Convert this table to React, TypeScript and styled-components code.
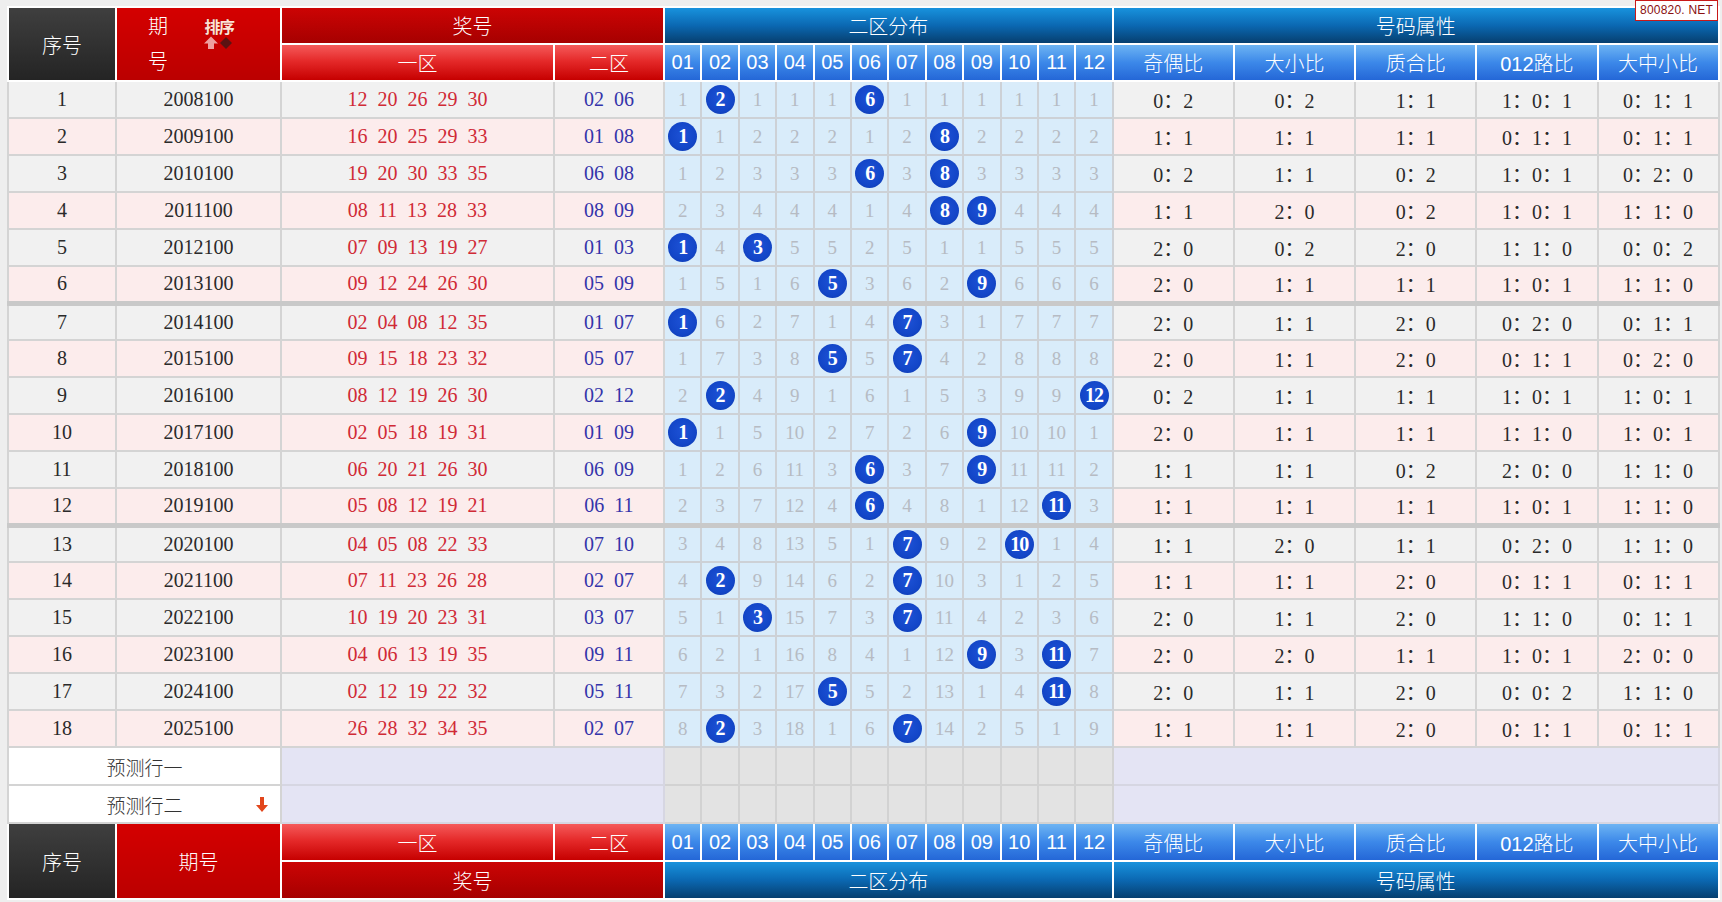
import React from "react"
import styled, { createGlobalStyle, css } from "styled-components"

const GlobalStyle = createGlobalStyle`
  html, body {
    margin: 0;
    padding: 0;
    background: #eeeeee;
  }
  body {
    font-family: "Liberation Serif", "Noto Sans CJK SC", serif;
  }
`

type Tone = "dark" | "period" | "prize" | "zone" | "dist" | "distNum"

const tones: Record<Tone, string> = {
  dark: "linear-gradient(#3f3f3f, #242424)",
  period: "linear-gradient(#d40000, #bb0000)",
  prize: "linear-gradient(#cc0404, #a60000)",
  zone: "linear-gradient(#f55a5a 0%, #e52a2a 45%, #c60000 100%)",
  dist: "linear-gradient(#1892dd 0%, #0b68b2 50%, #063f6f 100%)",
  distNum: "linear-gradient(#6db4f3 0%, #3c88e9 50%, #2467d7 100%)",
}

const Page = styled.div`
  position: relative;
  padding: 6px 4px 4px 7px;
`

const Watermark = styled.div`
  position: absolute;
  top: 0;
  right: 4px;
  padding: 2px 4px;
  background: #fff;
  border: 1px solid #c81818;
  color: #8a1010;
  font-family: "Liberation Sans", sans-serif;
  font-size: 12px;
  line-height: 15px;
  letter-spacing: 0.2px;
`

const Grid = styled.table`
  width: 1711px;
  table-layout: fixed;
  border-collapse: collapse;
`

const HeadRow = styled.tr<{ $tall?: boolean }>`
  height: ${(p) => (p.$tall ? 38 : 36)}px;
`

const HeadCell = styled.th<{ $tone: Tone; $latin?: boolean }>`
  background: ${(p) => tones[p.$tone]};
  color: #fff;
  border: 2px solid #fff;
  padding: 0;
  text-align: center;
  font-weight: 300;
  font-size: 20px;
  font-family: ${(p) =>
    p.$latin ? `"Liberation Sans", "Noto Sans CJK SC", sans-serif` : `"Noto Sans CJK SC", sans-serif`};
`

const PeriodHead = styled.div`
  display: flex;
  align-items: flex-start;
  padding-left: 31px;
  height: 72px;
`

const PeriodStack = styled.div`
  display: flex;
  flex-direction: column;
  line-height: 35px;
`

const SortBox = styled.div`
  display: flex;
  flex-direction: column;
  align-items: center;
  margin-left: 36px;
  margin-top: 9px;
`

const SortLabel = styled.span`
  font-size: 16px;
  line-height: 19px;
  font-weight: 700;
  letter-spacing: -1.5px;
  color: #ffe2d6;
  text-shadow: 0 0 1px #7a0000;
`

const DataRow = styled.tr<{ $sep?: boolean }>`
  height: 37px;
  ${(p) =>
    p.$sep &&
    css`
      & > td {
        border-top: 5px solid #c9c9c9;
      }
    `}
`

const Cell = styled.td<{ $alt: boolean; $color?: string }>`
  padding: 0;
  border: 2px solid #d4d4d4;
  background: ${(p) => (p.$alt ? "#fcecec" : "#f1f1f1")};
  color: ${(p) => p.$color ?? "#2a2a2a"};
  text-align: center;
  font-size: 20px;
  white-space: nowrap;
`

const Nums = styled.span`
  word-spacing: 5px;
`

const DistCell = styled.td`
  padding: 0;
  border: 2px solid #cdd1d6;
  background: #d9ecfa;
  color: #b6bbc3;
  text-align: center;
  font-size: 19px;
`

const Ball = styled.span`
  display: inline-flex;
  align-items: center;
  justify-content: center;
  width: 29px;
  height: 29px;
  border-radius: 50%;
  background: radial-gradient(circle at 50% 45%, #1d52d6 0%, #1346c8 60%, #0c36a8 100%);
  color: #fff;
  font-weight: 700;
  font-size: 20px;
  vertical-align: middle;
  letter-spacing: -1px;
`

const PredictRow = styled.tr`
  height: 38px;
`

const PredictLabel = styled.td`
  padding: 0;
  border: 2px solid #d4d4d4;
  background: #fff;
  color: #333;
  font-family: "Noto Sans CJK SC", sans-serif;
  font-weight: 300;
  font-size: 19px;
`

const LabelLine = styled.div`
  display: grid;
  grid-template-columns: 1fr auto 1fr;
  align-items: center;
`

const ArrowSlot = styled.span`
  display: flex;
  justify-content: flex-end;
  padding-right: 12px;
`

const PredictBlank = styled.td<{ $grey?: boolean }>`
  padding: 0;
  border: 2px solid ${(p) => (p.$grey ? "#d2d2d2" : "#d6d6e2")};
  background: ${(p) => (p.$grey ? "#e3e3e3" : "#e4e4f4")};
`

type Row = [string, string, string, number[], string[]]

const rows: Row[] = [
  ["2008100", "12 20 26 29 30", "02 06", [1, 0, 1, 1, 1, 0, 1, 1, 1, 1, 1, 1], ["0：2", "0：2", "1：1", "1：0：1", "0：1：1"]],
  ["2009100", "16 20 25 29 33", "01 08", [0, 1, 2, 2, 2, 1, 2, 0, 2, 2, 2, 2], ["1：1", "1：1", "1：1", "0：1：1", "0：1：1"]],
  ["2010100", "19 20 30 33 35", "06 08", [1, 2, 3, 3, 3, 0, 3, 0, 3, 3, 3, 3], ["0：2", "1：1", "0：2", "1：0：1", "0：2：0"]],
  ["2011100", "08 11 13 28 33", "08 09", [2, 3, 4, 4, 4, 1, 4, 0, 0, 4, 4, 4], ["1：1", "2：0", "0：2", "1：0：1", "1：1：0"]],
  ["2012100", "07 09 13 19 27", "01 03", [0, 4, 0, 5, 5, 2, 5, 1, 1, 5, 5, 5], ["2：0", "0：2", "2：0", "1：1：0", "0：0：2"]],
  ["2013100", "09 12 24 26 30", "05 09", [1, 5, 1, 6, 0, 3, 6, 2, 0, 6, 6, 6], ["2：0", "1：1", "1：1", "1：0：1", "1：1：0"]],
  ["2014100", "02 04 08 12 35", "01 07", [0, 6, 2, 7, 1, 4, 0, 3, 1, 7, 7, 7], ["2：0", "1：1", "2：0", "0：2：0", "0：1：1"]],
  ["2015100", "09 15 18 23 32", "05 07", [1, 7, 3, 8, 0, 5, 0, 4, 2, 8, 8, 8], ["2：0", "1：1", "2：0", "0：1：1", "0：2：0"]],
  ["2016100", "08 12 19 26 30", "02 12", [2, 0, 4, 9, 1, 6, 1, 5, 3, 9, 9, 0], ["0：2", "1：1", "1：1", "1：0：1", "1：0：1"]],
  ["2017100", "02 05 18 19 31", "01 09", [0, 1, 5, 10, 2, 7, 2, 6, 0, 10, 10, 1], ["2：0", "1：1", "1：1", "1：1：0", "1：0：1"]],
  ["2018100", "06 20 21 26 30", "06 09", [1, 2, 6, 11, 3, 0, 3, 7, 0, 11, 11, 2], ["1：1", "1：1", "0：2", "2：0：0", "1：1：0"]],
  ["2019100", "05 08 12 19 21", "06 11", [2, 3, 7, 12, 4, 0, 4, 8, 1, 12, 0, 3], ["1：1", "1：1", "1：1", "1：0：1", "1：1：0"]],
  ["2020100", "04 05 08 22 33", "07 10", [3, 4, 8, 13, 5, 1, 0, 9, 2, 0, 1, 4], ["1：1", "2：0", "1：1", "0：2：0", "1：1：0"]],
  ["2021100", "07 11 23 26 28", "02 07", [4, 0, 9, 14, 6, 2, 0, 10, 3, 1, 2, 5], ["1：1", "1：1", "2：0", "0：1：1", "0：1：1"]],
  ["2022100", "10 19 20 23 31", "03 07", [5, 1, 0, 15, 7, 3, 0, 11, 4, 2, 3, 6], ["2：0", "1：1", "2：0", "1：1：0", "0：1：1"]],
  ["2023100", "04 06 13 19 35", "09 11", [6, 2, 1, 16, 8, 4, 1, 12, 0, 3, 0, 7], ["2：0", "2：0", "1：1", "1：0：1", "2：0：0"]],
  ["2024100", "02 12 19 22 32", "05 11", [7, 3, 2, 17, 0, 5, 2, 13, 1, 4, 0, 8], ["2：0", "1：1", "2：0", "0：0：2", "1：1：0"]],
  ["2025100", "26 28 32 34 35", "02 07", [8, 0, 3, 18, 1, 6, 0, 14, 2, 5, 1, 9], ["1：1", "1：1", "2：0", "0：1：1", "0：1：1"]],
]

const ballNums = ["01", "02", "03", "04", "05", "06", "07", "08", "09", "10", "11", "12"]
const attrNames = ["奇偶比", "大小比", "质合比", "012路比", "大中小比"]

const SortIcon = () => (
  <svg width="30" height="14" viewBox="0 0 30 14">
    <path d="M7 0.5 L14 7.5 L10 7.5 L10 13 L4 13 L4 7.5 L0 7.5 Z" fill="#eea0a0" />
    <path d="M22 1 L28 7 L22 13 L16 7 Z" fill="#5c1212" />
  </svg>
)

const DownArrow = () => (
  <svg width="12" height="15" viewBox="0 0 12 15">
    <path d="M4 0 H8 V8 H12 L6 15 L0 8 H4 Z" fill="#e2461c" />
  </svg>
)

const NumHeads = () => (
  <>
    {ballNums.map((n) => (
      <HeadCell key={n} $tone="distNum" $latin>
        {n}
      </HeadCell>
    ))}
    {attrNames.map((a) => (
      <HeadCell key={a} $tone="distNum" $latin={a === "012路比"}>
        {a}
      </HeadCell>
    ))}
  </>
)

export default function App() {
  return (
    <Page>
      <GlobalStyle />
      <Watermark>800820. NET</Watermark>
      <Grid>
        <colgroup>
          <col style={{ width: 108 }} />
          <col style={{ width: 165 }} />
          <col style={{ width: 273 }} />
          <col style={{ width: 110 }} />
          {ballNums.map((n) => (
            <col key={n} style={{ width: 37.4 }} />
          ))}
          {attrNames.map((a) => (
            <col key={a} style={{ width: 121.2 }} />
          ))}
        </colgroup>
        <thead>
          <HeadRow>
            <HeadCell $tone="dark" rowSpan={2}>
              序号
            </HeadCell>
            <HeadCell $tone="period" rowSpan={2}>
              <PeriodHead>
                <PeriodStack>
                  <span>期</span>
                  <span>号</span>
                </PeriodStack>
                <SortBox>
                  <SortLabel>排序</SortLabel>
                  <SortIcon />
                </SortBox>
              </PeriodHead>
            </HeadCell>
            <HeadCell $tone="prize" colSpan={2}>
              奖号
            </HeadCell>
            <HeadCell $tone="dist" colSpan={12}>
              二区分布
            </HeadCell>
            <HeadCell $tone="dist" colSpan={5}>
              号码属性
            </HeadCell>
          </HeadRow>
          <HeadRow>
            <HeadCell $tone="zone">一区</HeadCell>
            <HeadCell $tone="zone">二区</HeadCell>
            <NumHeads />
          </HeadRow>
        </thead>
        <tbody>
          {rows.map(([period, front, back, dist, attrs], i) => {
            const alt = i % 2 === 1
            return (
              <DataRow key={period} $sep={i === 6 || i === 12}>
                <Cell $alt={alt}>{i + 1}</Cell>
                <Cell $alt={alt}>{period}</Cell>
                <Cell $alt={alt} $color="#d02a36">
                  <Nums>{front}</Nums>
                </Cell>
                <Cell $alt={alt} $color="#3434aa">
                  <Nums>{back}</Nums>
                </Cell>
                {dist.map((d, k) => (
                  <DistCell key={k}>{d === 0 ? <Ball>{k + 1}</Ball> : d}</DistCell>
                ))}
                {attrs.map((a, k) => (
                  <Cell key={k} $alt={alt}>
                    {a}
                  </Cell>
                ))}
              </DataRow>
            )
          })}
          {["预测行一", "预测行二"].map((label, r) => (
            <PredictRow key={label}>
              <PredictLabel colSpan={2}>
                <LabelLine>
                  <span />
                  <span>{label}</span>
                  <ArrowSlot>{r === 1 && <DownArrow />}</ArrowSlot>
                </LabelLine>
              </PredictLabel>
              <PredictBlank colSpan={2} />
              {ballNums.map((n) => (
                <PredictBlank key={n} $grey />
              ))}
              <PredictBlank colSpan={5} />
            </PredictRow>
          ))}
        </tbody>
        <tfoot>
          <HeadRow $tall>
            <HeadCell $tone="dark" rowSpan={2}>
              序号
            </HeadCell>
            <HeadCell $tone="period" rowSpan={2}>
              期号
            </HeadCell>
            <HeadCell $tone="zone">一区</HeadCell>
            <HeadCell $tone="zone">二区</HeadCell>
            <NumHeads />
          </HeadRow>
          <HeadRow $tall>
            <HeadCell $tone="prize" colSpan={2}>
              奖号
            </HeadCell>
            <HeadCell $tone="dist" colSpan={12}>
              二区分布
            </HeadCell>
            <HeadCell $tone="dist" colSpan={5}>
              号码属性
            </HeadCell>
          </HeadRow>
        </tfoot>
      </Grid>
    </Page>
  )
}
